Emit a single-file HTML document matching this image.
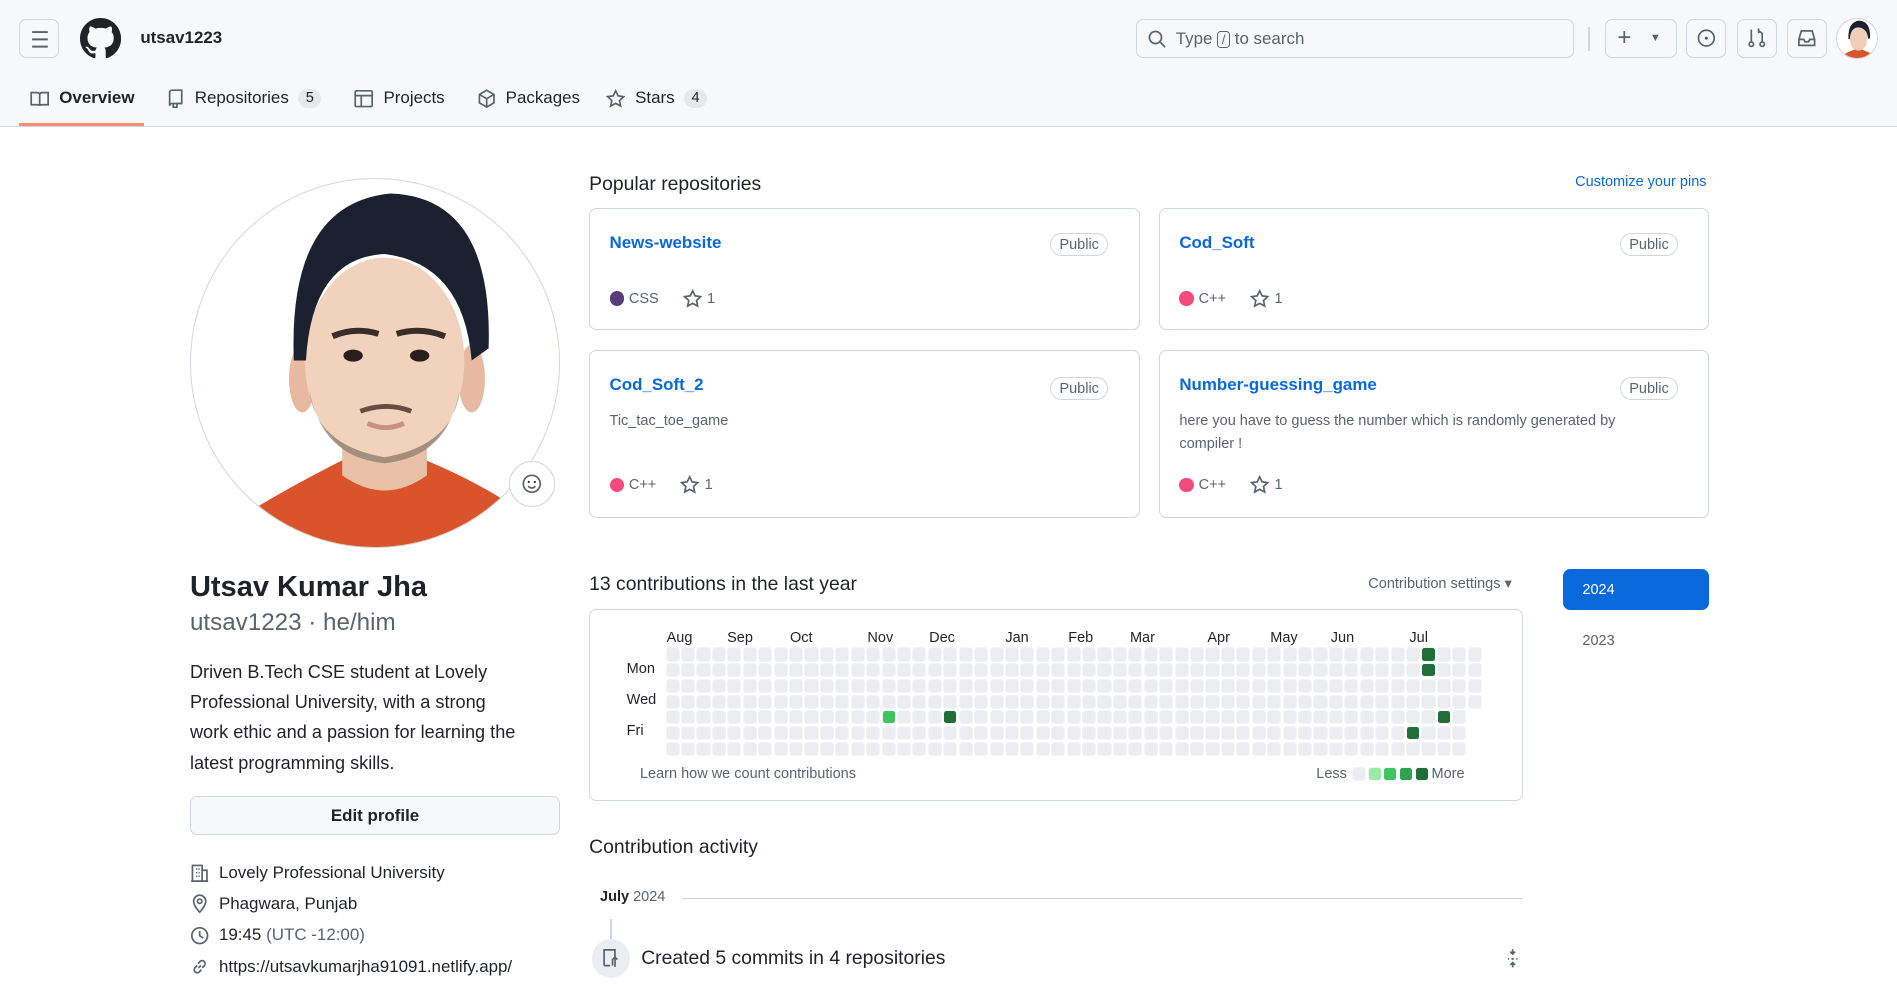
<!DOCTYPE html>
<html><head><meta charset="utf-8">
<style>
html{zoom:1.2098}
*{box-sizing:border-box;margin:0;padding:0}
body{width:1568px;height:810px;overflow:hidden;background:#fff;font-family:"Liberation Sans",sans-serif;color:#1f2328;position:relative}
.a{position:absolute}
.hdr{left:0;top:0;width:1568px;height:105px;background:#f6f8fa;border-bottom:1px solid #d0d7de}
.btn{position:absolute;border:1px solid #d0d7de;border-radius:6px;background:#f6f8fa}
.tab{position:absolute;top:73px;font-size:14px;color:#1f2328;display:flex;align-items:center;gap:8px}
.cnt{background:#e6e8eb;border-radius:10px;font-size:12px;padding:1px 6px;color:#1f2328}
.card{position:absolute;border:1px solid #d0d7de;border-radius:6px;width:455px}
.card .t{position:absolute;left:16px;top:20px;color:#0969da;font-weight:bold;font-size:14px}
.pub{position:absolute;right:25px;top:20px;border:1px solid #d0d7de;border-radius:12px;font-size:12px;color:#59636e;padding:2px 7px}
.meta{position:absolute;left:16px;font-size:12px;color:#59636e;display:flex;align-items:center}
.dot{width:12px;height:12px;border-radius:50%;display:inline-block;margin-right:4px}
.desc{position:absolute;left:16px;top:50px;font-size:12px;color:#59636e;line-height:19px;width:390px}
.ic{fill:none;stroke:#59636e;stroke-width:1.4}
.cell{position:absolute;width:10px;height:10px;border-radius:2px;background:#ebedf0;outline:1px solid rgba(31,35,40,.05)}
.ml{position:absolute;top:521px;font-size:12px;color:#1f2328}
.info{position:absolute;left:157px;font-size:14px;display:flex;align-items:center;gap:8px}
</style></head><body>
<div class="a hdr"></div>
<div class="btn" style="left:16px;top:16px;width:33px;height:32px"><svg width="33" height="32" viewBox="0 0 33 32"><path d="M10 10h13M10 16h13M10 22h13" stroke="#59636e" stroke-width="1.6"/></svg></div>
<svg class="a" style="left:66px;top:15px" width="34" height="34" viewBox="0 0 16 16"><path fill="#1f2328" d="M8 0C3.58 0 0 3.58 0 8c0 3.54 2.29 6.53 5.47 7.59.4.07.55-.17.55-.38 0-.19-.01-.82-.01-1.49-2.01.37-2.53-.49-2.69-.94-.09-.23-.48-.94-.82-1.13-.28-.15-.68-.52-.01-.53.63-.01 1.08.58 1.23.82.72 1.21 1.87.87 2.33.66.07-.52.28-.87.51-1.07-1.78-.2-3.64-.89-3.64-3.95 0-.87.31-1.59.82-2.15-.08-.2-.36-1.02.08-2.12 0 0 .67-.21 2.2.82.64-.18 1.32-.27 2-.27.68 0 1.36.09 2 .27 1.53-1.04 2.2-.82 2.2-.82.44 1.1.16 1.92.08 2.12.51.56.82 1.27.82 2.15 0 3.07-1.87 3.75-3.65 3.95.29.25.54.73.54 1.48 0 1.07-.01 1.93-.01 2.2 0 .21.15.46.55.38A8.013 8.013 0 0 0 16 8c0-4.42-3.58-8-8-8z"/></svg>
<div class="a" style="left:116px;top:23px;font-size:14px;font-weight:bold">utsav1223</div>
<div class="btn" style="left:939px;top:16px;width:362px;height:32px;background:#f6f8fa"><svg class="a" style="left:8px;top:7px" width="16" height="16"><circle cx="7" cy="7" r="5" class="ic" stroke="#59636e"/><path d="M11 11l4 4" class="ic"/></svg><span class="a" style="left:32px;top:7px;font-size:14px;color:#59636e">Type <span style="border:1px solid #59636e;border-radius:3px;font-size:11px;padding:0 3px">/</span> to search</span></div>
<div class="a" style="left:1313px;top:22px;width:1px;height:20px;background:#d0d7de"></div>
<div class="btn" style="left:1327px;top:16px;width:59px;height:32px"><span class="a" style="left:9px;top:3px;font-size:20px;color:#59636e">+</span><span class="a" style="left:36px;top:10px;font-size:9px;color:#59636e">▼</span></div>
<div class="btn" style="left:1394px;top:16px;width:33px;height:32px"><svg width="31" height="30"><circle cx="16" cy="15" r="6.5" class="ic"/><circle cx="16" cy="15" r="1.3" fill="#59636e"/></svg></div>
<div class="btn" style="left:1436px;top:16px;width:33px;height:32px"><svg width="31" height="30"><circle cx="11" cy="20" r="1.8" class="ic"/><circle cx="20" cy="20" r="1.8" class="ic"/><path d="M11 8v10M20 18v-7l-3-2M17 7v4" class="ic"/></svg></div>
<div class="btn" style="left:1477px;top:16px;width:33px;height:32px"><svg width="31" height="30"><path d="M9 16l2-7h9l2 7v5H9zM9 16h4l1 2h3l1-2h4" class="ic"/></svg></div>
<div class="a" style="left:1518px;top:15px;width:34px;height:34px;border-radius:50%;overflow:hidden;border:1px solid #d0d7de;background:#fff"><svg width="34" height="34" viewBox="0 0 306 306"><path d="M40 270q40-25 95-45h45q55 20 100 45v40H40z" fill="#d9542a"/><ellipse cx="160" cy="150" rx="66" ry="85" fill="#efcdb6"/><path d="M85 150Q80 20 165 12Q250 15 246 140L232 150Q225 70 160 62Q100 65 95 150Z" fill="#1b2130"/></svg></div>

<div class="tab" style="left:25px"><svg width="16" height="16"><path d="M1 3h5q2 0 2 2v9q0-1-2-1H1zM15 3h-5q-2 0-2 2v9q0-1 2-1h5z" class="ic" stroke="#1f2328"/></svg><b style="color:#1f2328;font-weight:600">Overview</b></div>
<div class="a" style="left:16px;top:102px;width:103px;height:2px;background:#fd8c73"></div>
<div class="tab" style="left:137px"><svg width="16" height="16"><path d="M3 14V3q0-2 2-2h8v11H5q-2 0-2 2zM6 12v4l1.5-1 1.5 1v-4" class="ic"/></svg>Repositories <span class="cnt">5</span></div>
<div class="tab" style="left:293px"><svg width="16" height="16"><rect x="1" y="1.5" width="14" height="13" rx="1" class="ic"/><path d="M1 5.5h14M6 5.5v9" class="ic"/></svg>Projects</div>
<div class="tab" style="left:394px"><svg width="16" height="16"><path d="M8 1l6 3.5v7L8 15l-6-3.5v-7zM2 4.5L8 8l6-3.5M8 8v7" class="ic"/></svg>Packages</div>
<div class="tab" style="left:501px"><svg width="16" height="16"><path d="M8 1.5l2 4.2 4.6.6-3.4 3.2.9 4.6L8 11.9l-4.1 2.2.9-4.6-3.4-3.2 4.6-.6z" class="ic"/></svg>Stars <span class="cnt">4</span></div>

<!-- avatar -->
<div class="a" style="left:157px;top:147px;width:306px;height:306px;border-radius:50%;overflow:hidden;border:1px solid #d0d7de;background:#fff">
<svg width="306" height="306" viewBox="0 0 306 306">
<path d="M40 280q40-25 90-50l28 25 30-25q50 20 90 48v40H40z" fill="#d9542a"/>
<path d="M125 200h70v45q-35 25-70 0z" fill="#e8c0a8"/>
<ellipse cx="92" cy="165" rx="11" ry="28" fill="#e6b9a0"/><ellipse cx="232" cy="165" rx="11" ry="28" fill="#e6b9a0"/>
<ellipse cx="160" cy="150" rx="66" ry="85" fill="#f0d2bd"/>
<path d="M98 175q10 55 62 60 52-5 62-60q-5 45-62 55-57-10-62-55z" fill="#6a5548" opacity=".55"/>
<path d="M85 150Q80 20 165 12Q250 15 246 140L232 150Q225 70 160 62Q100 65 95 150Z" fill="#1b2130"/>
<path d="M117 130q18-8 38-2M170 128q20-6 40 2" stroke="#3a2c28" stroke-width="5" fill="none"/>
<ellipse cx="134" cy="146" rx="8" ry="5" fill="#2a1e1c"/><ellipse cx="189" cy="146" rx="8" ry="5" fill="#2a1e1c"/>
<path d="M140 192q22-8 42 0" stroke="#6b4a40" stroke-width="4" fill="none"/>
<path d="M146 202q15 7 30 0" stroke="#c98f80" stroke-width="4" fill="none"/>
</svg></div>
<div class="a" style="left:421px;top:381px;width:38px;height:38px;border-radius:50%;background:#fff;border:1px solid #d0d7de"><svg width="36" height="36"><circle cx="18" cy="18" r="7" class="ic" stroke="#1f2328"/><circle cx="15.5" cy="16.5" r=".9" fill="#1f2328"/><circle cx="20.5" cy="16.5" r=".9" fill="#1f2328"/><path d="M15 20q3 3 6 0" class="ic" stroke="#1f2328"/></svg></div>

<div class="a" style="left:157px;top:472px;font-size:24px;font-weight:600">Utsav Kumar Jha</div>
<div class="a" style="left:157px;top:503px;font-size:20px;color:#59636e;font-weight:300">utsav1223 · he/him</div>
<div class="a" style="left:157px;top:543px;width:320px;font-size:15px;line-height:25px;white-space:nowrap">Driven B.Tech CSE student at Lovely<br>Professional University, with a strong<br>work ethic and a passion for learning the<br>latest programming skills.</div>
<div class="btn" style="left:157px;top:658px;width:306px;height:32px;text-align:center;font-size:14px;font-weight:bold;line-height:31px">Edit profile</div>
<div class="info" style="top:713px"><svg width="16" height="16"><path d="M2 15V2h8v13M10 6h4v9M1 15h14M5 5h1M7 5h1M5 8h1M7 8h1M5 11h1M7 11h1" class="ic"/></svg>Lovely Professional University</div>
<div class="info" style="top:739px"><svg width="16" height="16"><path d="M8 15s5-5 5-9a5 5 0 00-10 0c0 4 5 9 5 9z" class="ic"/><circle cx="8" cy="6" r="1.8" class="ic"/></svg>Phagwara, Punjab</div>
<div class="info" style="top:765px"><svg width="16" height="16"><circle cx="8" cy="8" r="6.5" class="ic"/><path d="M8 4v4l3 2" class="ic"/></svg>19:45 <span style="color:#59636e;margin-left:-4px">(UTC -12:00)</span></div>
<div class="info" style="top:791px"><svg width="16" height="16"><path d="M7 9l2-2M6 7L4 9a2.5 2.5 0 003.5 3.5L9.5 10.5M10 9l2-2a2.5 2.5 0 00-3.5-3.5L6.5 5.5" class="ic"/></svg>https://utsavkumarjha91091.netlify.app/</div>

<!-- repos -->
<div class="a" style="left:487px;top:143px;font-size:16px">Popular repositories</div>
<div class="a" style="left:1302px;top:144px;font-size:12px;color:#0969da">Customize your pins</div>
<div class="card" style="left:487px;top:172px;height:101px"><div class="t">News-website</div><div class="pub">Public</div><div class="meta" style="top:66px"><span class="dot" style="background:#563d7c"></span>CSS<svg style="margin-left:20px;margin-right:4px" width="16" height="16"><path d="M8 1.5l2 4.2 4.6.6-3.4 3.2.9 4.6L8 11.9l-4.1 2.2.9-4.6-3.4-3.2 4.6-.6z" class="ic"/></svg>1</div></div>
<div class="card" style="left:958px;top:172px;height:101px"><div class="t">Cod_Soft</div><div class="pub">Public</div><div class="meta" style="top:66px"><span class="dot" style="background:#f34b7d"></span>C++<svg style="margin-left:20px;margin-right:4px" width="16" height="16"><path d="M8 1.5l2 4.2 4.6.6-3.4 3.2.9 4.6L8 11.9l-4.1 2.2.9-4.6-3.4-3.2 4.6-.6z" class="ic"/></svg>1</div></div>
<div class="card" style="left:487px;top:289px;height:139px"><div class="t" style="top:20px">Cod_Soft_2</div><div class="pub" style="top:22px">Public</div><div class="desc" style="top:49px">Tic_tac_toe_game</div><div class="meta" style="top:103px"><span class="dot" style="background:#f34b7d"></span>C++<svg style="margin-left:20px;margin-right:4px" width="16" height="16"><path d="M8 1.5l2 4.2 4.6.6-3.4 3.2.9 4.6L8 11.9l-4.1 2.2.9-4.6-3.4-3.2 4.6-.6z" class="ic"/></svg>1</div></div>
<div class="card" style="left:958px;top:289px;height:139px"><div class="t" style="top:20px">Number-guessing_game</div><div class="pub" style="top:22px">Public</div><div class="desc" style="top:49px">here you have to guess the number which is randomly generated by compiler !</div><div class="meta" style="top:103px"><span class="dot" style="background:#f34b7d"></span>C++<svg style="margin-left:20px;margin-right:4px" width="16" height="16"><path d="M8 1.5l2 4.2 4.6.6-3.4 3.2.9 4.6L8 11.9l-4.1 2.2.9-4.6-3.4-3.2 4.6-.6z" class="ic"/></svg>1</div></div>

<!-- contributions -->
<div class="a" style="left:487px;top:474px;font-size:16px">13 contributions in the last year</div>
<div class="a" style="left:1131px;top:476px;font-size:12px;color:#59636e">Contribution settings ▾</div>
<div class="a" style="left:487px;top:503px;width:772px;height:159px;border:1px solid #d0d7de;border-radius:6px"></div>
<div class="a" style="left:1292px;top:470px;width:121px;height:34px;background:#0969da;border-radius:6px;color:#fff;font-size:12px;padding:11px 16px">2024</div>
<div class="a" style="left:1308px;top:523px;font-size:12px;color:#59636e">2023</div>
<div class="ml" style="left:551px">Aug</div><div class="ml" style="left:601px">Sep</div><div class="ml" style="left:653px">Oct</div><div class="ml" style="left:717px">Nov</div><div class="ml" style="left:768px">Dec</div><div class="ml" style="left:831px">Jan</div><div class="ml" style="left:883px">Feb</div><div class="ml" style="left:934px">Mar</div><div class="ml" style="left:998px">Apr</div><div class="ml" style="left:1050px">May</div><div class="ml" style="left:1100px">Jun</div><div class="ml" style="left:1165px">Jul</div>
<div class="a" style="left:518px;top:546px;font-size:12px">Mon</div>
<div class="a" style="left:518px;top:572px;font-size:12px">Wed</div>
<div class="a" style="left:518px;top:598px;font-size:12px">Fri</div>
<div id="g"></div>
<div class="a" style="left:529px;top:633px;font-size:12px;color:#59636e">Learn how we count contributions</div>
<div class="a" style="left:1088px;top:633px;font-size:12px;color:#59636e;display:flex;align-items:center;gap:3px">Less <span class="cell" style="position:static;margin-left:2px"></span><span class="cell" style="position:static;background:#9be9a8"></span><span class="cell" style="position:static;background:#40c463"></span><span class="cell" style="position:static;background:#30a14e"></span><span class="cell" style="position:static;background:#216e39"></span> More</div>
<script>
var g=document.getElementById('g'),h='';
var sp={'49,0':'#216e39','49,1':'#216e39','14,4':'#40c463','18,4':'#216e39','50,4':'#216e39','48,5':'#216e39'};
for(var c=0;c<53;c++)for(var r=0;r<7;r++){if(c==52&&r>3)continue;var col=sp[c+','+r]||'#ebedf0';h+='<div class="cell" style="left:'+(551+c*12.75)+'px;top:'+(536+r*13)+'px;background:'+col+'"></div>';}
g.innerHTML=h;
</script>

<div class="a" style="left:487px;top:691px;font-size:16px">Contribution activity</div>
<div class="a" style="left:496px;top:735px;font-size:12px;font-weight:bold">July <span style="font-weight:normal;color:#59636e">2024</span></div>
<div class="a" style="left:564px;top:742px;width:695px;height:1px;background:#d0d7de"></div>
<div class="a" style="left:504px;top:760px;width:2px;height:16px;background:#d0d7de"></div>
<div class="a" style="left:489px;top:776px;width:32px;height:32px;border-radius:50%;background:#eaeef2"><svg width="32" height="32"><path d="M10 22V9h9v6M10 22h5M17 22v-5l2-2 2 2M19 15v8" class="ic"/></svg></div>
<div class="a" style="left:530px;top:783px;font-size:16px;color:#1f2328">Created 5 commits in 4 repositories</div>
<svg class="a" style="left:1242px;top:784px" width="16" height="18"><path d="M8 1v4M6 3l2 2 2-2M4 9h1M7 9h2M11 9h1M8 16v-4M6 14l2-2 2 2" class="ic"/></svg>
</body></html>
